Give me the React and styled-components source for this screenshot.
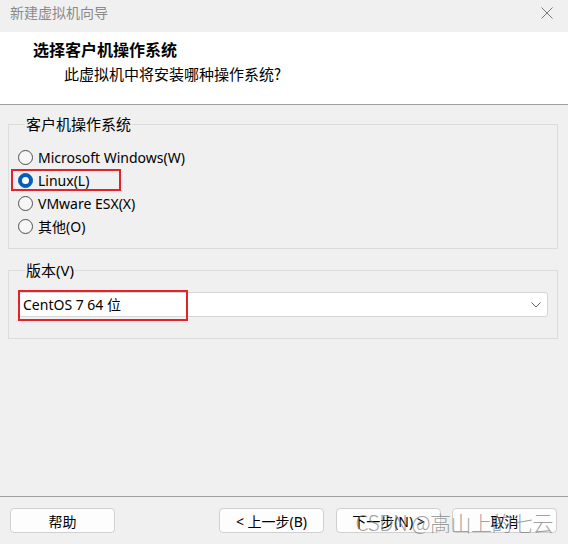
import styled, { createGlobalStyle } from 'styled-components';

const GlobalStyle = createGlobalStyle`
  html, body {
    margin: 0;
    padding: 0;
    background: #f0f0f0;
  }
  body {
    font-family: 'Noto Sans', 'Noto Sans CJK SC', sans-serif;
    color: #000;
  }
`;

const osList = [
  { id: 'win', label: 'Microsoft Windows(W)' },
  { id: 'linux', label: 'Linux(L)', checked: true, marked: true },
  { id: 'esx', label: 'VMware ESX(X)' },
  { id: 'other', label: '其他(O)' },
];

function CloseIcon() {
  return (
    <svg width='12' height='12' viewBox='0 0 12 12'>
      <path d='M0.5 0.5 L11.5 11.5 M11.5 0.5 L0.5 11.5' stroke='#7a7a7a' strokeWidth='1' fill='none' />
    </svg>
  );
}

function Chevron() {
  return (
    <svg width='10' height='6' viewBox='0 0 10 6'>
      <path d='M0.5 0.5 L5 5 L9.5 0.5' stroke='#606060' strokeWidth='1' fill='none' />
    </svg>
  );
}

export default function App() {
  return (
    <Window>
      <GlobalStyle />
      <TitleBar>
        <TitleText>新建虚拟机向导</TitleText>
        <CloseBtn>
          <CloseIcon />
        </CloseBtn>
      </TitleBar>

      <Header>
        <HeaderTitle>选择客户机操作系统</HeaderTitle>
        <HeaderSub>此虚拟机中将安装哪种操作系统?</HeaderSub>
      </Header>

      <Content>
        <Group>
          <Legend>客户机操作系统</Legend>
          <RadioList>
            {osList.map((os) => (
              <RadioRow key={os.id}>
                <RadioCircle $checked={os.checked} />
                <RadioLabel>{os.label}</RadioLabel>
                {os.marked && <Mark $left={-7} $top={0} $width={110} $height={22} />}
              </RadioRow>
            ))}
          </RadioList>
        </Group>

        <Group $top={13}>
          <Legend>版本(V)</Legend>
          <SelectWrap>
            <Select>
              <SelectText>CentOS 7 64 位</SelectText>
              <Chevron />
            </Select>
            <Mark $left={-1} $top={-2} $width={170} $height={31} />
          </SelectWrap>
        </Group>
      </Content>

      <Footer>
        <Button>帮助</Button>
        <Spacer />
        <Button>&lt; 上一步(B)</Button>
        <Button $gap={12}>下一步(N) &gt;</Button>
        <Button $gap={11}>取消</Button>
        <Watermark>CSDN @高山上的七云</Watermark>
      </Footer>
    </Window>
  );
}

const Window = styled.div`
  width: 568px;
  height: 544px;
  display: flex;
  flex-direction: column;
  background: #f0f0f0;
  overflow: hidden;
  border-bottom-left-radius: 8px;
`;

const TitleBar = styled.div`
  height: 32px;
  flex: none;
  display: flex;
  align-items: center;
  justify-content: space-between;
  padding: 0 15px 0 10px;
  background: #f0f0f0;
  box-sizing: border-box;
`;

const TitleText = styled.span`
  font-family: 'Noto Sans CJK SC', sans-serif;
  font-size: 14px;
  line-height: 18px;
  color: #8a8a8a;
  margin-top: -8px;
`;

const CloseBtn = styled.span`
  display: flex;
  margin-top: -6px;
`;

const Header = styled.div`
  height: 72px;
  flex: none;
  background: #fff;
  border-bottom: 1px solid #a0a0a0;
  box-sizing: content-box;
  display: flex;
  flex-direction: column;
  padding-left: 33px;
`;

const HeaderTitle = styled.div`
  font-family: 'Noto Sans CJK SC', sans-serif;
  font-size: 16px;
  font-weight: 700;
  line-height: 20px;
  margin-top: 7px;
`;

const HeaderSub = styled.div`
  font-family: 'Noto Sans CJK SC', sans-serif;
  font-size: 15px;
  line-height: 20px;
  margin-top: 5px;
  padding-left: 31px;
`;

const Content = styled.div`
  flex: 1;
  padding: 11px 10px 0 8px;
`;

const Group = styled.fieldset`
  margin: ${(p) => p.$top || 0}px 0 0 0;
  padding: 0 9px 10px 9px;
  border: 1px solid #dcdcdc;
  min-width: 0;
`;

const Legend = styled.legend`
  margin-left: 7px;
  padding: 0 1px;
  font-size: 15px;
  line-height: 17px;
  color: #000;
`;

const RadioList = styled.div`
  display: flex;
  flex-direction: column;
  padding-top: 13px;
`;

const RadioRow = styled.div`
  position: relative;
  height: 23px;
  display: flex;
  align-items: center;
  gap: 5px;
`;

const RadioCircle = styled.span`
  width: 15px;
  height: 15px;
  border-radius: 50%;
  box-sizing: border-box;
  border: 1px solid ${(p) => (p.$checked ? '#005fb8' : '#4f4f4f')};
  background: ${(p) => (p.$checked ? '#005fb8' : '#f6f6f6')};
  display: flex;
  align-items: center;
  justify-content: center;
  &::after {
    content: '';
    display: ${(p) => (p.$checked ? 'block' : 'none')};
    width: 7px;
    height: 7px;
    border-radius: 50%;
    background: #fff;
  }
`;

const RadioLabel = styled.span`
  font-size: 14px;
  line-height: 20px;
`;

const Mark = styled.span`
  position: absolute;
  left: ${(p) => p.$left}px;
  top: ${(p) => p.$top}px;
  width: ${(p) => p.$width}px;
  height: ${(p) => p.$height}px;
  border: 2px solid #e3222b;
  box-sizing: border-box;
  pointer-events: none;
`;

const SelectWrap = styled.div`
  position: relative;
  margin: 13px 0 11px 1px;
`;

const Select = styled.div`
  height: 25px;
  box-sizing: border-box;
  background: #fff;
  border: 1px solid #d6d6d6;
  border-radius: 3px;
  display: flex;
  align-items: center;
  justify-content: space-between;
  padding: 0 6px 0 3px;
`;

const SelectText = styled.span`
  font-size: 14px;
  line-height: 20px;
`;

const Footer = styled.div`
  position: relative;
  height: 48px;
  flex: none;
  box-sizing: border-box;
  border-top: 1px solid #a0a0a0;
  display: flex;
  align-items: flex-start;
  padding: 11px 11px 0 10px;
`;

const Spacer = styled.div`
  flex: 1;
`;

const Button = styled.div`
  width: 105px;
  height: 25px;
  box-sizing: border-box;
  margin-left: ${(p) => p.$gap || 0}px;
  background: #fdfdfd;
  border: 1px solid #d0d0d0;
  border-radius: 4px;
  display: flex;
  align-items: center;
  justify-content: center;
  font-size: 14px;
  color: #000;
`;

const Watermark = styled.span`
  position: absolute;
  right: 15px;
  top: 12px;
  font-family: 'Noto Sans CJK SC', sans-serif;
  font-size: 21px;
  font-weight: 300;
  line-height: 26px;
  letter-spacing: -0.5px;
  color: rgba(120, 120, 120, 0.7);
  pointer-events: none;
  white-space: nowrap;
`;
